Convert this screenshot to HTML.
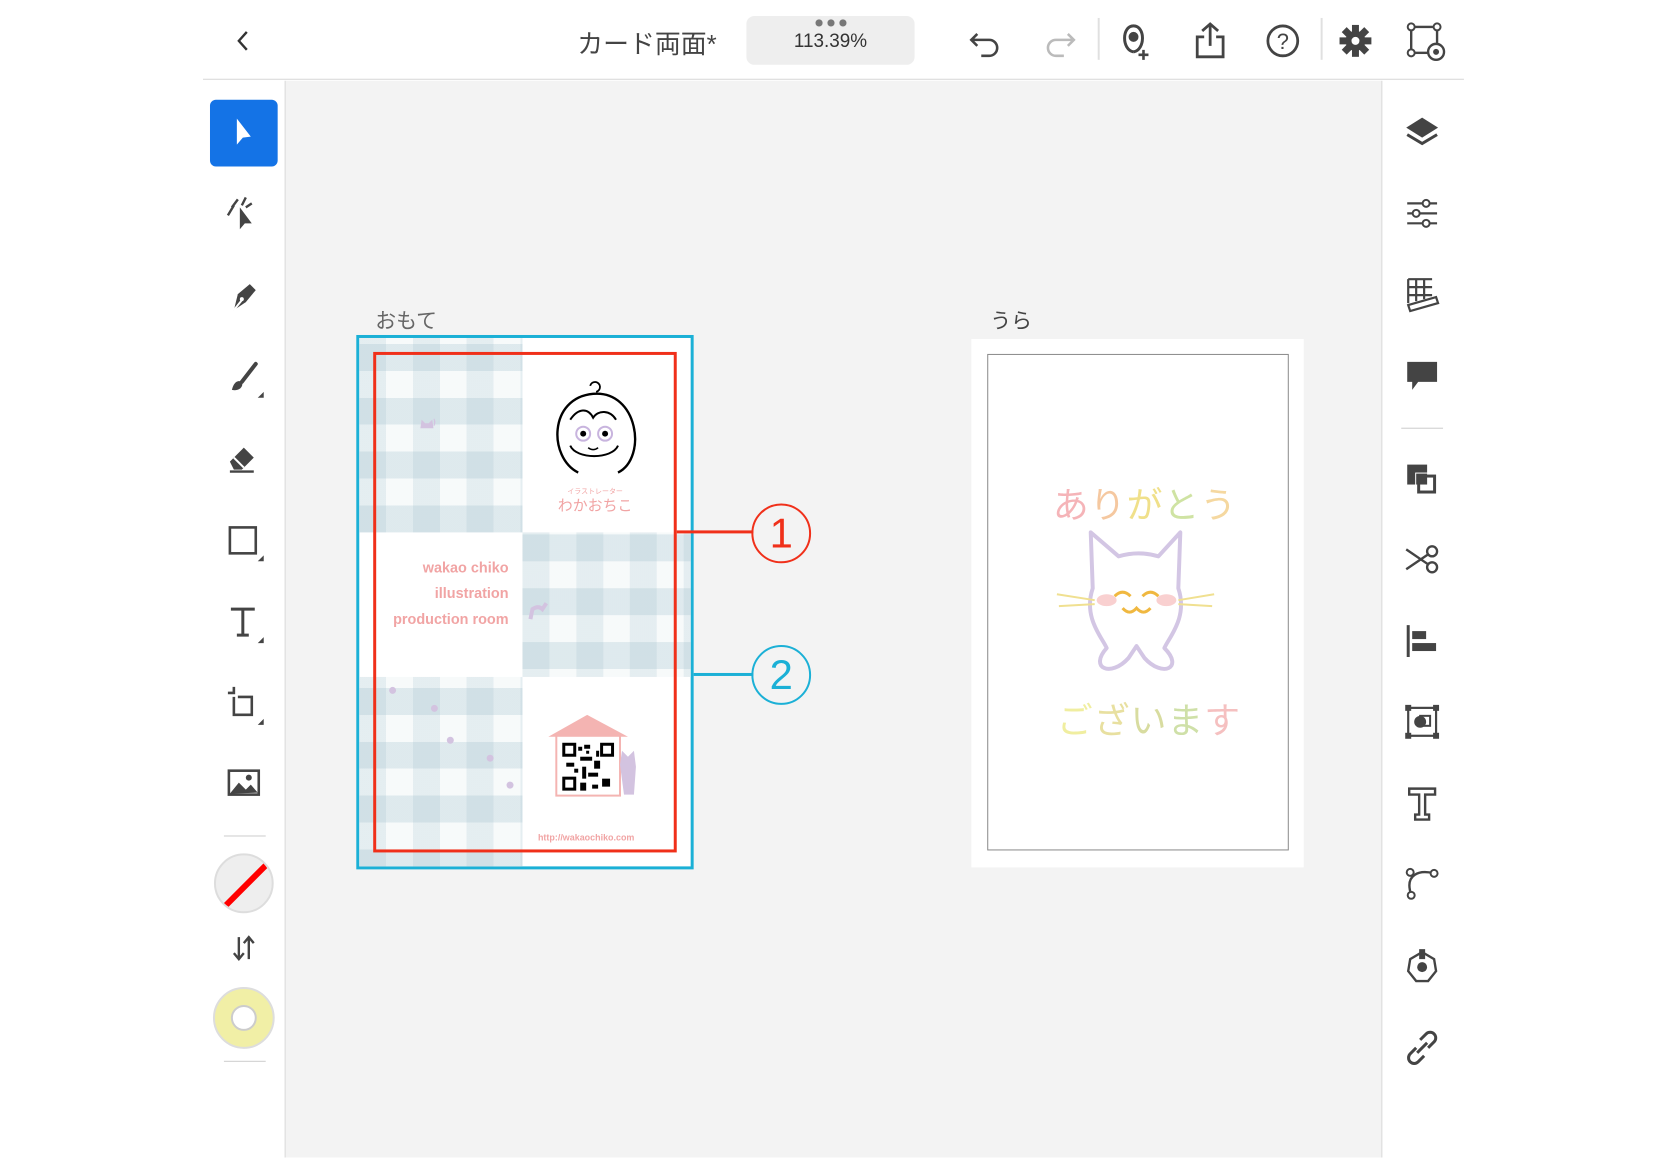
<!DOCTYPE html>
<html><head><meta charset="utf-8"><style>
*{margin:0;padding:0;box-sizing:border-box}
body{width:1667px;height:1155px;background:#fff;position:relative;overflow:hidden;font-family:"Liberation Sans","Noto Sans CJK JP",sans-serif}
#wrap{position:absolute;left:0;top:0;width:1667px;height:1160px;transform:scale(0.9952,0.997);transform-origin:0 0}
.abs{position:absolute}
#top{left:204px;top:0;width:1267px;height:80px;background:#fff;border-bottom:1px solid #d6d6d6}
#canvas{left:287px;top:81px;width:1101px;height:1080px;background:#f3f3f3}
#ltb{left:204px;top:81px;width:83px;height:1080px;background:#fff;border-right:1px solid #d6d6d6}
#rtb{left:1388px;top:81px;width:83px;height:1080px;background:#fff;border-left:1px solid #d6d6d6}
.ging{background-color:#fff;background-image:repeating-linear-gradient(90deg,rgba(150,185,198,.25) 0 27px,rgba(150,185,198,.08) 27px 54px),repeating-linear-gradient(0deg,rgba(150,185,198,.25) 0 27px,rgba(255,255,255,0) 27px 54px)}
</style></head><body><div id="wrap">
<div id="top" class="abs"></div>
<div id="canvas" class="abs"></div>
<div id="ltb" class="abs"></div>
<div id="rtb" class="abs"></div>

<svg class="abs" style="left:235px;top:28px" width="20" height="26"><path d="M13 4 L5 13 L13 22" stroke="#333" stroke-width="2.4" fill="none"/></svg>
<div class="abs" style="left:580px;top:24px;font-size:26px;color:#444">カード両面*</div>
<div class="abs" style="left:750px;top:16px;width:169px;height:49px;background:#eeeeee;border-radius:8px"></div>
<div class="abs" style="left:818px;top:15px;width:34px;height:10px"><svg width="34" height="10"><circle cx="5" cy="5" r="3.6" fill="#777"/><circle cx="17" cy="5" r="3.6" fill="#777"/><circle cx="29" cy="5" r="3.6" fill="#777"/></svg></div>
<div class="abs" style="left:750px;top:31px;width:169px;text-align:center;font-size:19px;color:#333">113.39%</div>

<svg class="abs" style="left:970px;top:22px" width="40" height="40"><path d="M12 12 L6 18 L12 24 M6 18 H24 a8 8 0 0 1 0 16 H16" stroke="#444" stroke-width="2.6" fill="none"/></svg>
<svg class="abs" style="left:1045px;top:22px" width="40" height="40"><path d="M28 12 L34 18 L28 24 M34 18 H16 a8 8 0 0 0 0 16 H24" stroke="#bbb" stroke-width="2.6" fill="none"/></svg>
<div class="abs" style="left:1103px;top:18px;width:2px;height:42px;background:#e0e0e0"></div>
<svg class="abs" style="left:1119px;top:20px" width="42" height="42"><path d="M20 32 C8 30 8 6 20 6 C32 6 32 30 20 32" stroke="#444" stroke-width="3" fill="none"/><circle cx="20" cy="17" r="5" fill="#444"/><path d="M30 30 v10 M25 35 h10" stroke="#444" stroke-width="2.6"/></svg>
<svg class="abs" style="left:1195px;top:20px" width="42" height="42"><path d="M21 4 V26 M13 11 L21 4 L29 11 M15 17 H8 V37 H34 V17 H27" stroke="#444" stroke-width="2.8" fill="none"/></svg>
<svg class="abs" style="left:1269px;top:21px" width="40" height="40"><circle cx="20" cy="20" r="15" stroke="#444" stroke-width="2.8" fill="none"/><text x="20" y="28" font-size="22" text-anchor="middle" fill="#444" font-family="Liberation Sans">?</text></svg>
<div class="abs" style="left:1327px;top:18px;width:2px;height:42px;background:#e0e0e0"></div>
<svg class="abs" style="left:1342px;top:21px" width="40" height="40"><g transform="translate(20 20)"><circle r="10" fill="#444"/><g fill="#444"><rect x="-3.5" y="-16" width="7" height="8"/><rect x="-3.5" y="8" width="7" height="8"/><rect x="-16" y="-3.5" width="8" height="7"/><rect x="8" y="-3.5" width="8" height="7"/><g transform="rotate(45)"><rect x="-3.5" y="-16" width="7" height="8"/><rect x="-3.5" y="8" width="7" height="8"/><rect x="-16" y="-3.5" width="8" height="7"/><rect x="8" y="-3.5" width="8" height="7"/></g></g><circle r="4" fill="#fff"/></g></svg>
<svg class="abs" style="left:1412px;top:21px" width="42" height="42"><rect x="6" y="6" width="26" height="26" stroke="#444" stroke-width="2.4" fill="none"/><circle cx="6" cy="6" r="3.5" fill="#fff" stroke="#444" stroke-width="2"/><circle cx="32" cy="6" r="3.5" fill="#fff" stroke="#444" stroke-width="2"/><circle cx="6" cy="32" r="3.5" fill="#fff" stroke="#444" stroke-width="2"/><circle cx="31" cy="31" r="8" fill="#fff" stroke="#444" stroke-width="2.4"/><circle cx="31" cy="31" r="3" fill="#444"/></svg>

<div class="abs" style="left:211px;top:100px;width:68px;height:67px;background:#1473e6;border-radius:6px"></div>
<svg class="abs" style="left:225px;top:113px" width="40" height="40"><path d="M13 6 V32 L19 25 L27 24 Z" fill="#fff"/></svg>
<svg class="abs" style="left:225px;top:194px" width="40" height="40"><path d="M16 14 V36 L21 30 L28 30 Z" fill="#444"/><path d="M8 14 L14 6 M4 22 L10 12 M22 4 L18 12 M28 10 L22 14" stroke="#444" stroke-width="2.4"/></svg>
<svg class="abs" style="left:225px;top:277px" width="40" height="40"><path d="M10 34 L14 18 L26 8 L32 14 L22 26 Z" fill="#444"/><path d="M10 34 L18 24" stroke="#fff" stroke-width="2"/><circle cx="18" cy="23" r="2" fill="#fff"/></svg>
<svg class="abs" style="left:225px;top:359px" width="44" height="44"><path d="M32 6 L18 24" stroke="#444" stroke-width="4" stroke-linecap="round"/><path d="M8 32 C10 24 14 22 18 24 C20 28 16 34 8 32Z" fill="#444"/><path d="M40 34 L40 40 L34 40Z" fill="#444"/></svg>
<svg class="abs" style="left:225px;top:439px" width="40" height="40"><path d="M6 24 L20 10 L30 20 L18 32 H10 Z" fill="#444"/><path d="M6 34 H30" stroke="#444" stroke-width="2.4"/><path d="M10 20 L20 30" stroke="#fff" stroke-width="2"/></svg>
<svg class="abs" style="left:225px;top:521px" width="44" height="44"><rect x="6" y="8" width="26" height="26" stroke="#444" stroke-width="2.6" fill="none"/><path d="M40 36 L40 42 L34 42Z" fill="#444"/></svg>
<svg class="abs" style="left:225px;top:603px" width="44" height="44"><path d="M7 8 H31 M19 8 V34 M13 34 H25" stroke="#444" stroke-width="3" fill="none"/><path d="M40 36 L40 42 L34 42Z" fill="#444"/></svg>
<svg class="abs" style="left:225px;top:685px" width="44" height="44"><path d="M10 4 V10 H4 M10 14 V32 H28 V14 H14" stroke="#444" stroke-width="2.6" fill="none"/><path d="M40 36 L40 42 L34 42Z" fill="#444"/></svg>
<svg class="abs" style="left:225px;top:765px" width="40" height="40"><rect x="5" y="8" width="30" height="24" stroke="#444" stroke-width="2.6" fill="none"/><path d="M6 31 L15 20 L22 27 L27 22 L34 30 Z" fill="#444"/><circle cx="25" cy="15" r="3" fill="#444"/></svg>
<div class="abs" style="left:225px;top:838px;width:42px;height:1px;background:#ccc"></div>
<div class="abs" style="left:215px;top:856px;width:60px;height:60px;border-radius:50%;background:#eee;border:2px solid #ddd;overflow:hidden"><div style="position:absolute;left:-6px;top:27px;width:72px;height:6px;background:#f00;transform:rotate(-45deg)"></div></div>
<svg class="abs" style="left:230px;top:936px" width="30" height="30"><path d="M10 4 V26 M5 20 L10 26 L15 20 M20 26 V4 M15 10 L20 4 L25 10" stroke="#444" stroke-width="2.4" fill="none"/></svg>
<div class="abs" style="left:214px;top:990px;width:62px;height:62px;border-radius:50%;background:#f1efa6;border:2px solid #ddd"></div>
<div class="abs" style="left:232px;top:1008px;width:26px;height:26px;border-radius:50%;background:#fff;border:2px solid #ccc"></div>
<div class="abs" style="left:225px;top:1064px;width:42px;height:1px;background:#ccc"></div>

<svg class="abs" style="left:1409px;top:113px" width="40" height="40"><path d="M20 5 L36 15 L20 25 L4 15Z" fill="#444"/><path d="M5 22 L20 31 L35 22" stroke="#444" stroke-width="3" fill="none"/></svg>
<svg class="abs" style="left:1409px;top:194px" width="40" height="40"><path d="M5 10 H35 M5 20 H35 M5 30 H35" stroke="#444" stroke-width="2.2"/><circle cx="24" cy="10" r="3.5" fill="#fff" stroke="#444" stroke-width="2"/><circle cx="14" cy="20" r="3.5" fill="#fff" stroke="#444" stroke-width="2"/><circle cx="24" cy="30" r="3.5" fill="#fff" stroke="#444" stroke-width="2"/></svg>
<svg class="abs" style="left:1409px;top:276px" width="40" height="40"><path d="M6 4 V28 M14 4 V26 M22 4 V24 M6 4 H30 M6 12 H30 M6 20 H30" stroke="#444" stroke-width="2.2" fill="none"/><path d="M6 30 L34 22 L36 28 L8 36Z" stroke="#444" stroke-width="2.2" fill="#fff"/></svg>
<svg class="abs" style="left:1409px;top:357px" width="40" height="40"><path d="M5 6 H35 V26 H16 L10 34 V26 H5Z" fill="#444"/></svg>
<div class="abs" style="left:1408px;top:429px;width:42px;height:1px;background:#ccc"></div>
<svg class="abs" style="left:1409px;top:461px" width="40" height="40"><rect x="5" y="5" width="20" height="20" fill="#444"/><rect x="14" y="14" width="21" height="21" fill="#444" stroke="#fff" stroke-width="2"/><rect x="18" y="18" width="13" height="13" fill="#fff"/><rect x="14" y="14" width="11" height="11" fill="#444"/></svg>
<svg class="abs" style="left:1409px;top:541px" width="40" height="40"><circle cx="30" cy="12" r="5" stroke="#444" stroke-width="2.4" fill="none"/><circle cx="30" cy="28" r="5" stroke="#444" stroke-width="2.4" fill="none"/><path d="M4 10 L26 25 M4 30 L26 15" stroke="#444" stroke-width="2.4"/></svg>
<svg class="abs" style="left:1409px;top:623px" width="40" height="40"><path d="M6 4 V36" stroke="#444" stroke-width="3"/><rect x="10" y="10" width="14" height="8" fill="#444"/><rect x="10" y="22" width="24" height="8" fill="#444"/></svg>
<svg class="abs" style="left:1409px;top:704px" width="40" height="40"><rect x="6" y="6" width="28" height="28" stroke="#444" stroke-width="2.2" fill="none"/><rect x="3" y="3" width="6" height="6" fill="#444"/><rect x="31" y="3" width="6" height="6" fill="#444"/><rect x="3" y="31" width="6" height="6" fill="#444"/><rect x="31" y="31" width="6" height="6" fill="#444"/><circle cx="18" cy="20" r="6" fill="#444"/><rect x="18" y="14" width="10" height="10" stroke="#444" stroke-width="2" fill="none"/></svg>
<svg class="abs" style="left:1409px;top:786px" width="40" height="40"><path d="M7 5 H33 V11 H23 V31 H27 V36 H13 V31 H17 V11 H7Z" stroke="#444" stroke-width="2.4" fill="none"/></svg>
<svg class="abs" style="left:1409px;top:866px" width="40" height="40"><path d="M8 28 C4 12 16 6 32 10" stroke="#444" stroke-width="2.4" fill="none"/><circle cx="8" cy="9" r="3.5" fill="#fff" stroke="#444" stroke-width="2"/><circle cx="32" cy="10" r="3.5" fill="#fff" stroke="#444" stroke-width="2"/><circle cx="9" cy="32" r="3.5" fill="#fff" stroke="#444" stroke-width="2"/></svg>
<svg class="abs" style="left:1409px;top:950px" width="40" height="40"><path d="M20 5 L32 12 L34 24 L26 34 H14 L6 24 L8 12Z" stroke="#444" stroke-width="2.4" fill="none"/><rect x="17" y="2" width="6" height="10" fill="#444"/><circle cx="20" cy="20" r="5" fill="#444"/></svg>
<svg class="abs" style="left:1409px;top:1031px" width="40" height="40"><path d="M18 12 L24 6 A5 5 0 0 1 32 14 L26 20 M22 28 L16 34 A5 5 0 0 1 8 26 L14 20 M15 25 L25 15" stroke="#444" stroke-width="3" fill="none"/></svg>

<div class="abs" style="left:377px;top:306px;font-size:21px;color:#666">おもて</div>
<div class="abs" style="left:995px;top:306px;font-size:21px;color:#444">うら</div>

<div class="abs" style="left:358px;top:336px;width:339px;height:536px;background:#fff;border:3px solid #1bb0d6;overflow:hidden">
  <div class="abs ging" style="left:0;top:0;width:164px;height:195px"></div>
  <div class="abs ging" style="left:164px;top:195px;width:172px;height:145px;background-position:0 -8px"></div>
  <div class="abs ging" style="left:0;top:340px;width:164px;height:200px"></div>
  <div class="abs" style="left:0;top:218px;width:150px;text-align:right;color:#f1a4a4;font-weight:bold;font-size:14.5px;line-height:26px">wakao chiko<br>illustration<br>production room</div>
  <svg class="abs" style="left:180px;top:40px" width="150" height="140">
    <path d="M52 8 a5 5 0 1 1 6 6" stroke="#000" stroke-width="1.8" fill="none"/>
    <path d="M40 95 C10 80 10 20 55 16 C100 12 110 80 80 95" stroke="#000" stroke-width="2.4" fill="none"/>
    <path d="M32 42 C40 30 50 30 55 40 C60 32 72 32 78 42" stroke="#000" stroke-width="2" fill="none"/>
    <circle cx="45" cy="56" r="7" stroke="#c8b4de" stroke-width="2" fill="#fff"/><circle cx="67" cy="56" r="7" stroke="#c8b4de" stroke-width="2" fill="#fff"/>
    <circle cx="45" cy="56" r="3" fill="#000"/><circle cx="67" cy="56" r="3" fill="#000"/>
    <path d="M50 70 q5 4 10 0" stroke="#000" stroke-width="1.5" fill="none"/>
    <path d="M32 68 C38 82 74 82 80 68" stroke="#000" stroke-width="2" fill="none"/>
    <text x="57" y="116" font-size="7" fill="#f1a4a4" text-anchor="middle">イラストレーター</text>
    <text x="57" y="133" font-size="15" fill="#f1a4a4" text-anchor="middle">わかおちこ</text>
  </svg>
  <svg class="abs" style="left:180px;top:370px" width="150" height="150">
    <path d="M10 30 L49 8 L90 30Z" fill="#f4b4b2"/>
    <rect x="18" y="29" width="64" height="60" fill="#fff" stroke="#f4b4b2" stroke-width="2"/>
    <g fill="#000"><rect x="24" y="36" width="14" height="14"/><rect x="62" y="36" width="14" height="14"/><rect x="24" y="70" width="14" height="14"/><rect x="64" y="72" width="8" height="8"/><rect x="40" y="40" width="4" height="4"/><rect x="46" y="38" width="6" height="4"/><rect x="42" y="50" width="12" height="4"/><rect x="56" y="54" width="6" height="8"/><rect x="28" y="56" width="8" height="4"/><rect x="44" y="60" width="4" height="12"/><rect x="50" y="66" width="10" height="4"/><rect x="42" y="76" width="6" height="8"/><rect x="54" y="78" width="6" height="4"/><rect x="48" y="44" width="3" height="3"/><rect x="58" y="44" width="3" height="6"/><rect x="36" y="62" width="4" height="4"/></g>
    <g fill="#fff"><rect x="27" y="39" width="8" height="8"/><rect x="65" y="39" width="8" height="8"/><rect x="27" y="73" width="8" height="8"/></g>
    <path d="M82 58 L84 44 L90 50 L96 44 L98 60 L96 88 H86Z" fill="#d3c3e0"/>
    <text x="48" y="134" font-size="9" fill="#f1a4a4" text-anchor="middle" font-weight="bold">http://wakaochiko.com</text>
  </svg>
  <svg class="abs" style="left:60px;top:80px" width="20" height="12"><path d="M2 10 L3 3 L6 6 L10 6 L13 3 L14 10Z M15 8 q2 -4 0 -7" fill="#d3c3e0" stroke="#d3c3e0"/></svg>
  <svg class="abs" style="left:168px;top:262px" width="24" height="24"><path d="M4 20 L6 10 Q12 6 16 10 L20 4" stroke="#d3c3e0" stroke-width="4" fill="none"/></svg>
  <div class="abs" style="left:30px;top:350px;width:7px;height:7px;border-radius:50%;background:#d3c3e0"></div>
  <div class="abs" style="left:72px;top:368px;width:7px;height:7px;border-radius:50%;background:#d3c3e0"></div>
  <div class="abs" style="left:88px;top:400px;width:7px;height:7px;border-radius:50%;background:#d3c3e0"></div>
  <div class="abs" style="left:128px;top:418px;width:7px;height:7px;border-radius:50%;background:#d3c3e0"></div>
  <div class="abs" style="left:148px;top:445px;width:7px;height:7px;border-radius:50%;background:#d3c3e0"></div>
</div>
<div class="abs" style="left:375px;top:353px;width:305px;height:502px;border:3px solid #f0301a"></div>

<div class="abs" style="left:680px;top:532px;width:77px;height:3px;background:#f0301a"></div>
<div class="abs" style="left:697px;top:675px;width:60px;height:3px;background:#1bb0d6"></div>
<div class="abs" style="left:755px;top:505px;width:60px;height:60px;border-radius:50%;border:2.5px solid #f0301a;color:#f0301a;font-size:42px;text-align:center;line-height:56px">1</div>
<div class="abs" style="left:755px;top:647px;width:60px;height:60px;border-radius:50%;border:2.5px solid #1bb0d6;color:#1bb0d6;font-size:42px;text-align:center;line-height:56px">2</div>

<div class="abs" style="left:976px;top:340px;width:334px;height:530px;background:#fff"></div>
<div class="abs" style="left:992px;top:355px;width:303px;height:498px;border:1.5px solid #888;background:#fff"></div>
<div class="abs" style="left:1058px;top:478px;font-size:36px;letter-spacing:1px"><span style="color:#f5b4b8">あ</span><span style="color:#f5c8a0">り</span><span style="color:#f0e08a">が</span><span style="color:#cfe3a3">と</span><span style="color:#f5d8a0">う</span></div>
<div class="abs" style="left:1062px;top:694px;font-size:36px;letter-spacing:1px"><span style="color:#f0eea0">ご</span><span style="color:#e8e0a0">ざ</span><span style="color:#d8dca0">い</span><span style="color:#cfe0a8">ま</span><span style="color:#f5c0c0">す</span></div>
<svg class="abs" style="left:1060px;top:530px" width="170" height="160">
  <path d="M38 60 L36 4 L64 28 Q84 22 104 28 L126 4 L124 60 C134 90 114 110 110 120 C130 140 108 150 90 130 L82 118 L74 130 C56 150 34 140 52 120 C48 110 28 90 38 60Z" stroke="#d3c6e4" stroke-width="4" fill="none" stroke-linejoin="round"/>
  <path d="M60 68 q8 -8 16 0 M88 68 q8 -8 16 0 M68 80 q7 8 14 0 q7 8 14 0" stroke="#f0b840" stroke-width="3" fill="none"/>
  <ellipse cx="52" cy="72" rx="10" ry="6" fill="#f9d0d0"/><ellipse cx="112" cy="72" rx="10" ry="6" fill="#f9d0d0"/>
  <path d="M2 66 L40 72 M4 78 L40 76 M160 66 L124 72 M158 78 L124 76" stroke="#f0e090" stroke-width="2"/>
</svg>
</div></body></html>
